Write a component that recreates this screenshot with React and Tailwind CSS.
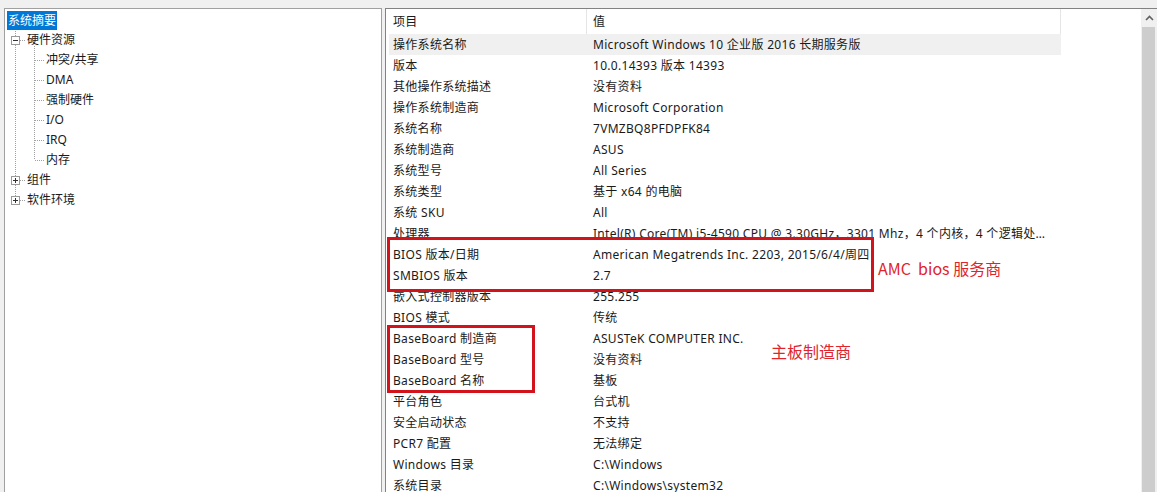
import React from 'react';

const rows = [
  ['操作系统名称', 'Microsoft Windows 10 企业版 2016 长期服务版'],
  ['版本', '10.0.14393 版本 14393'],
  ['其他操作系统描述', '没有资料'],
  ['操作系统制造商', 'Microsoft Corporation'],
  ['系统名称', '7VMZBQ8PFDPFK84'],
  ['系统制造商', 'ASUS'],
  ['系统型号', 'All Series'],
  ['系统类型', '基于 x64 的电脑'],
  ['系统 SKU', 'All'],
  ['处理器', 'Intel(R) Core(TM) i5-4590 CPU @ 3.30GHz，3301 Mhz，4 个内核，4 个逻辑处理器'],
  ['BIOS 版本/日期', 'American Megatrends Inc. 2203, 2015/6/4/周四'],
  ['SMBIOS 版本', '2.7'],
  ['嵌入式控制器版本', '255.255'],
  ['BIOS 模式', '传统'],
  ['BaseBoard 制造商', 'ASUSTeK COMPUTER INC.'],
  ['BaseBoard 型号', '没有资料'],
  ['BaseBoard 名称', '基板'],
  ['平台角色', '台式机'],
  ['安全启动状态', '不支持'],
  ['PCR7 配置', '无法绑定'],
  ['Windows 目录', 'C:\\Windows'],
  ['系统目录', 'C:\\Windows\\system32'],
];

const children = ['冲突/共享', 'DMA', '强制硬件', 'I/O', 'IRQ', '内存'];

// expand/collapse box of the tree
const Box = ({ x, y, plus }) => (
  <g>
    <rect x={x + 0.5} y={y + 0.5} width="8" height="8" fill="#fff" stroke="#9a9a9a" />
    <line x1={x + 2} y1={y + 4.5} x2={x + 7} y2={y + 4.5} stroke="#333" />
    {plus && <line x1={x + 4.5} y1={y + 2} x2={x + 4.5} y2={y + 7} stroke="#333" />}
  </g>
);

const TreeLines = () => {
  const dot = { stroke: '#a0a0a0', strokeDasharray: '1 1' };
  return (
    <svg className="absolute left-0 top-0" width="60" height="200">
      <line x1="10.5" y1="21" x2="10.5" y2="186" {...dot} />
      {[30.5, 170.5, 190.5].map((y) => (
        <line key={y} x1="15" y1={y} x2="21" y2={y} {...dot} />
      ))}
      <line x1="29.5" y1="36" x2="29.5" y2="150" {...dot} />
      {[50.5, 70.5, 90.5, 110.5, 130.5, 150.5].map((y) => (
        <line key={y} x1="30" y1={y} x2="39" y2={y} {...dot} />
      ))}
      <Box x={6} y={26} />
      <Box x={6} y={166} plus />
      <Box x={6} y={186} plus />
    </svg>
  );
};

export default function App() {
  return (
    <div className="w-[1157px] h-[492px] overflow-hidden bg-[#f0f0f0] pt-[8px] text-[12px] text-[#1a1a1a] font-['Noto_Sans','Noto_Sans_CJK_SC',sans-serif]">
      <div className="relative flex h-[500px]">
        {/* tree pane */}
        <div className="ml-[4px] w-[378px] border border-[#a0a0a0] bg-white pt-[1px]">
          <div className="relative">
            <TreeLines />
            <div className="relative flex h-5 items-center pl-[2px]">
              <span className="h-[19px] bg-[#0078d7] px-[1px] leading-[19px] text-white">系统摘要</span>
            </div>
            <div className="relative flex h-5 items-center pl-[22px]">硬件资源</div>
            {children.map((c) => (
              <div key={c} className="relative flex h-5 items-center pl-[41px]">{c}</div>
            ))}
            <div className="relative flex h-5 items-center pl-[22px]">组件</div>
            <div className="relative flex h-5 items-center pl-[22px]">软件环境</div>
          </div>
        </div>

        {/* details pane */}
        <div className="ml-[3px] flex flex-1 border-l border-t border-[#828282] bg-white">
          <div className="w-[676px] pl-[3px] tracking-[0.3px]">
            <div className="flex h-[25px] items-center">
              <div className="flex h-full w-[197px] items-center pl-[4px]">项目</div>
              <div className="flex h-full w-[475px] items-center border-l border-r border-[#e5e5e5] pl-[6px]">值</div>
            </div>
            {rows.map(([k, v], i) => (
              <div key={k} className={`flex h-[21px] w-[672px] items-center pt-[1px] ${i === 0 ? 'bg-[#f0f0f0]' : ''}`}>
                <div className="w-[197px] pl-[4px] whitespace-nowrap">{k}</div>
                <div className="w-[475px] truncate pl-[7px] pr-[4px]">{v}</div>
              </div>
            ))}
          </div>
          <div className="flex-1" />
          {/* scrollbar */}
          <div className="flex w-[16px] flex-col bg-[#f0f0f0]">
            <div className="flex h-[18px] items-center justify-center">
              <svg width="9" height="6" viewBox="0 0 9 6">
                <path d="M1 5 L4.5 1.5 L8 5" fill="none" stroke="#606060" strokeWidth="1.6" />
              </svg>
            </div>
            <div className="ml-[1px] mr-[2px] flex-1 bg-[#cdcdcd]" />
          </div>
        </div>

        {/* annotations */}
        <div className="absolute left-[387px] top-[229px] h-[55px] w-[487px] border-[3px] border-[#d3131b]" />
        <div className="absolute left-[387px] top-[317px] h-[68px] w-[148px] border-[3px] border-[#d3131b]" />
        <div className="absolute left-[878px] top-[248px] whitespace-pre text-[16px] text-[#e0242b] font-['Noto_Sans_CJK_SC',sans-serif]">AMC  bios 服务商</div>
        <div className="absolute left-[771px] top-[331px] text-[16px] text-[#e0242b] font-['Noto_Sans_CJK_SC',sans-serif]">主板制造商</div>
      </div>
    </div>
  );
}
